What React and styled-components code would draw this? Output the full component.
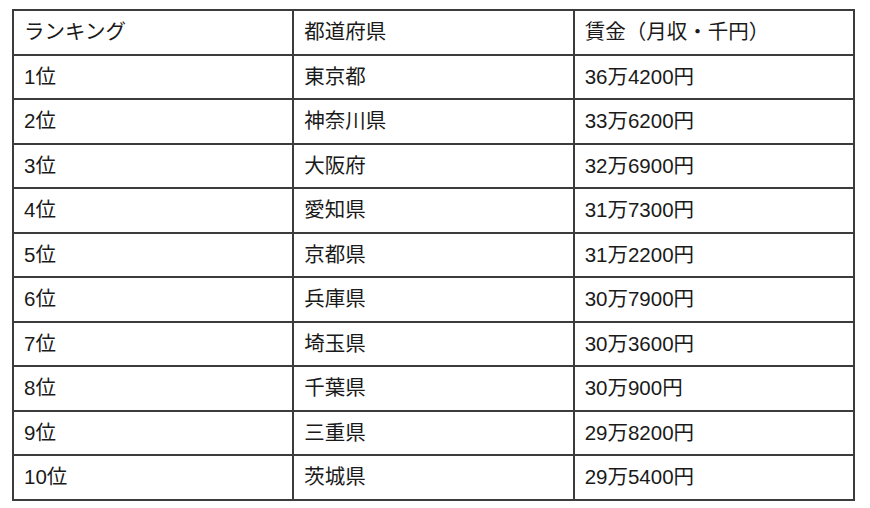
import React from 'react';
import styled, { createGlobalStyle } from 'styled-components';

const GlobalStyle = createGlobalStyle`
  html, body {
    margin: 0;
    padding: 0;
    background: #ffffff;
  }
  body {
    font-family: "Liberation Sans", "Noto Sans CJK JP", sans-serif;
    color: #1a1a1a;
  }
`;

const Page = styled.div`
  padding: 9px 0 0 12px;
`;

const Table = styled.table`
  width: 843px;
  border-collapse: collapse;
  table-layout: fixed;
`;

const Row = styled.tr`
  height: 44.5px;
`;

const Cell = styled.td`
  border: 2px solid #3c3c3c;
  padding: 0 0 0 10px;
  font-size: 20.5px;
  line-height: 1;
  vertical-align: middle;
  text-align: left;
  font-weight: 400;
  color: #1a1a1a;
`;

const HeadCell = styled(Cell).attrs({ as: 'th' })``;

const rows = [
  ['1位', '東京都', '36万4200円'],
  ['2位', '神奈川県', '33万6200円'],
  ['3位', '大阪府', '32万6900円'],
  ['4位', '愛知県', '31万7300円'],
  ['5位', '京都県', '31万2200円'],
  ['6位', '兵庫県', '30万7900円'],
  ['7位', '埼玉県', '30万3600円'],
  ['8位', '千葉県', '30万900円'],
  ['9位', '三重県', '29万8200円'],
  ['10位', '茨城県', '29万5400円'],
];

export default function App() {
  return (
    <Page>
      <GlobalStyle />
      <Table>
        <thead>
          <Row>
            <HeadCell>ランキング</HeadCell>
            <HeadCell>都道府県</HeadCell>
            <HeadCell>賃金（月収・千円）</HeadCell>
          </Row>
        </thead>
        <tbody>
          {rows.map((r) => (
            <Row key={r[0]}>
              <Cell>{r[0]}</Cell>
              <Cell>{r[1]}</Cell>
              <Cell>{r[2]}</Cell>
            </Row>
          ))}
        </tbody>
      </Table>
    </Page>
  );
}
